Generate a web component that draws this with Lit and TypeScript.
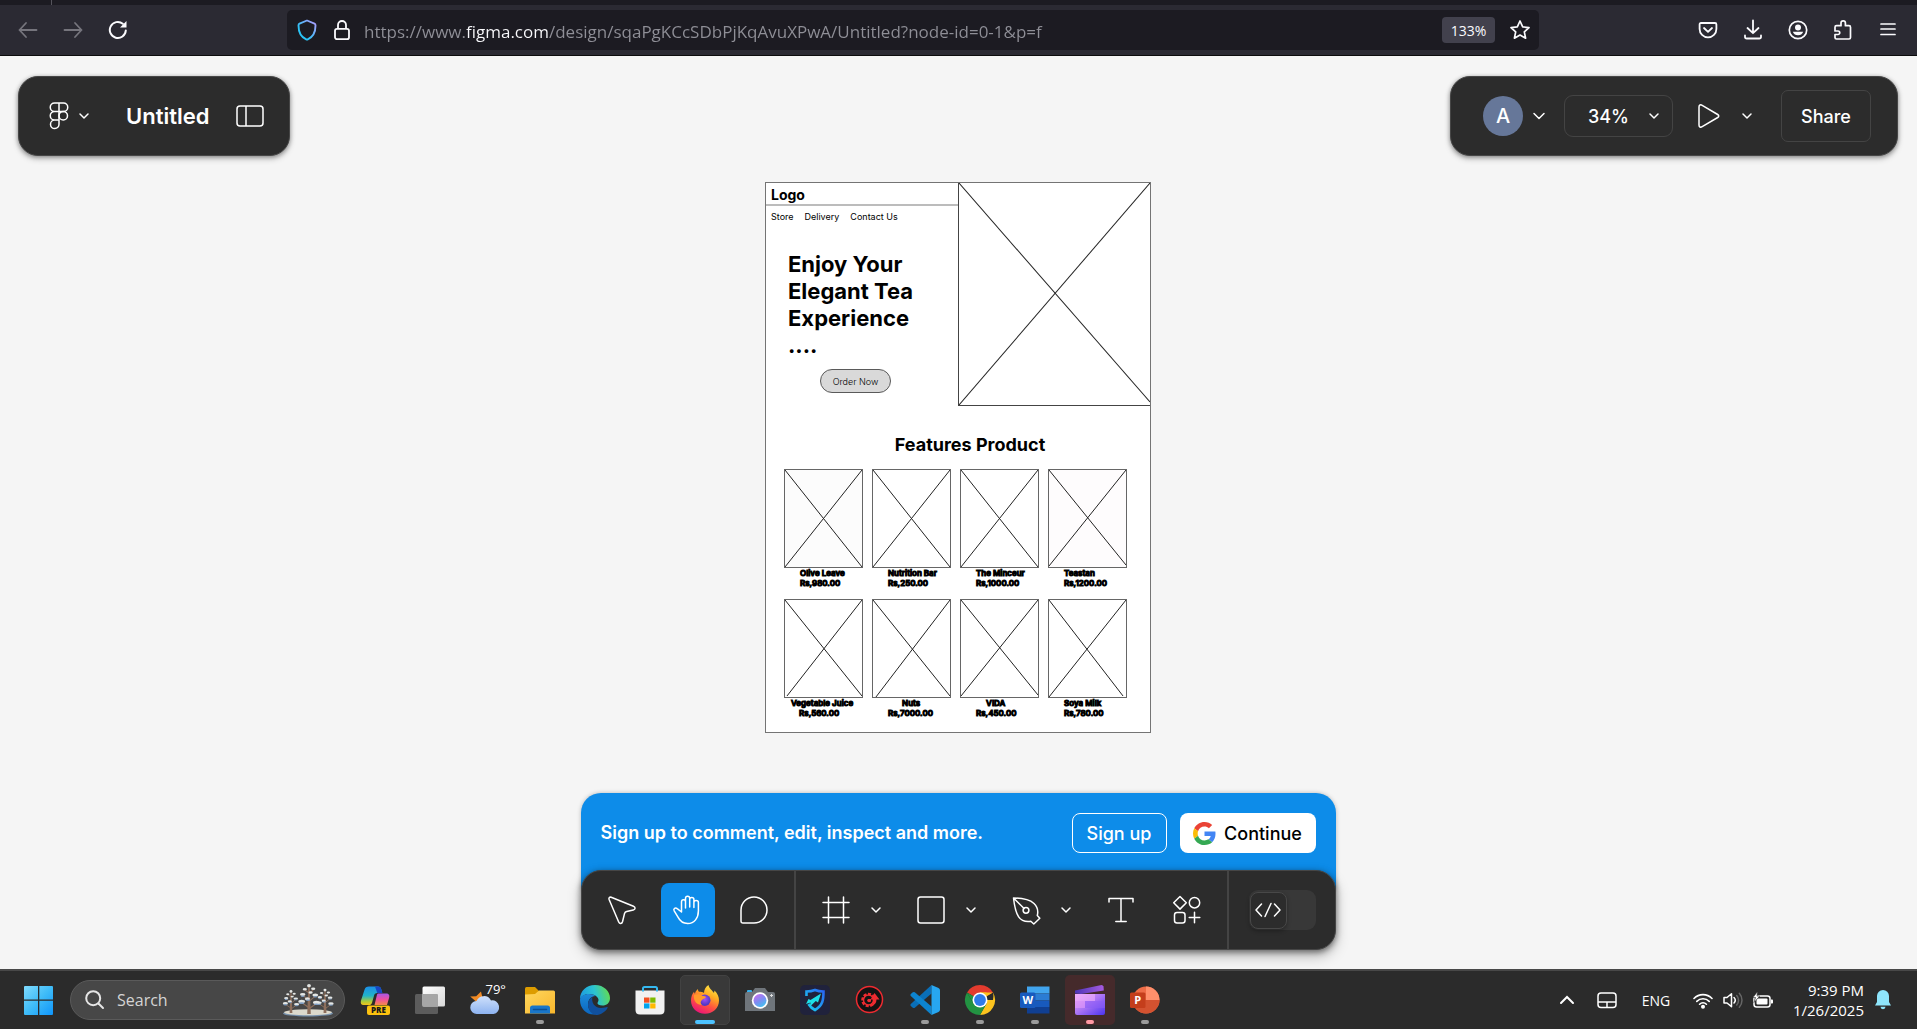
import { LitElement, html, svg, css } from "lit";
import { customElement } from "lit/decorators.js";

const chevron = html`<svg class="chev" width="12" height="8" viewBox="0 0 12 8" fill="none" stroke="#fff" stroke-width="1.5" stroke-linecap="round" stroke-linejoin="round"><path d="M2 2l4 4 4-4" /></svg>`;
const chevronWide = html`<svg class="chev" width="14" height="8" viewBox="0 0 14 8" fill="none" stroke="#fff" stroke-width="1.5" stroke-linecap="round" stroke-linejoin="round"><path d="M2 1.5l5 5 5-5" /></svg>`;

const reset = css`
  * { box-sizing: border-box; }
  button, input, select { font: inherit; color: inherit; margin: 0; padding: 0; border: 0; background: none; }
  button { display: flex; align-items: center; justify-content: center; flex: none; }
  svg { display: block; flex: none; }
`;

@customElement("browser-bar")
class BrowserBar extends LitElement {
  static styles = [reset, css`
    :host { display: block; font-family: "Open Sans", "Noto Sans", sans-serif; color: #fbfbfe; }
    .tabs { height: 5px; background: #1c1b22; padding-left: 51px; }
    .tab-edge { width: 1px; height: 5px; background: #55545c; }
    .bar { display: flex; align-items: center; height: 51px; background: #2b2a33; border-bottom: 1px solid #0c0c0d; }
    .nav { display: flex; width: 287px; padding-left: 5px; }
    .nav button, .tools button { width: 45px; height: 40px; }
    .url { flex: 1; min-width: 0; height: 40px; display: flex; align-items: center; background: #1c1b22; border-radius: 5px; padding: 0 3px 0 4px; }
    .url button { width: 32px; height: 32px; }
    .url .lock { width: 38px; }
    .url input { flex: 1; min-width: 0; height: 32px; margin-left: 3px; padding-top: 2px; outline: none; font-size: 17px;
      color: transparent; background: linear-gradient(90deg, #8f8f97 102px, #fbfbfe 102px 185px, #8f8f97 185px);
      -webkit-background-clip: text; background-clip: text; }
    .url .zoom { width: 53px; height: 26px; background: #42414d; border-radius: 4px; font-size: 14px; margin-right: 9px; }
    .tools { display: flex; justify-content: flex-end; width: 378px; padding-right: 7px; }
  `];
  render() {
    return html`
      <div class="tabs"><div class="tab-edge"></div></div>
      <div class="bar">
        <div class="nav">
          <button aria-label="Back"><svg width="20" height="20" viewBox="0 0 20 20" fill="none" stroke="#76757d" stroke-width="1.8" stroke-linecap="round" stroke-linejoin="round"><path d="M18.500 10H1.500M8 3L1.500 10 8 17" /></svg></button>
          <button aria-label="Forward"><svg width="20" height="20" viewBox="0 0 20 20" fill="none" stroke="#76757d" stroke-width="1.8" stroke-linecap="round" stroke-linejoin="round"><path d="M1.500 10h17M12 3l6.500 7L12 17" /></svg></button>
          <button aria-label="Reload"><svg width="20" height="20" viewBox="0 0 20 20" fill="none" stroke="#fbfbfe" stroke-width="2" stroke-linecap="round"><path d="M17.800 10.500a8 8 0 1 1-3-6.800" /><path d="M18.500 1v6.500H12z" fill="#fbfbfe" stroke="none" /></svg></button>
        </div>
        <div class="url">
          <button aria-label="Tracking protection"><svg width="20" height="22" viewBox="0 0 20 22" fill="none"><defs><linearGradient id="sh" x1="0" y1="1" x2="1" y2="0"><stop offset=".3" stop-color="#2ac3f5" /><stop offset="1" stop-color="#b69aff" /></linearGradient></defs><path d="M10 1.500l7.500 3.200c.9.400 1 .8 1 1.700 0 5.500-1.500 11-7.700 13.900-.6.300-1 .3-1.600 0C3 17.400 1.500 11.900 1.500 6.400c0-.9.100-1.300 1-1.700z" stroke="url(#sh)" stroke-width="1.900" stroke-linejoin="round" /></svg></button>
          <button class="lock" aria-label="Site information"><svg width="18" height="22" viewBox="0 0 18 22" fill="none" stroke="#fbfbfe" stroke-width="1.800"><rect x="2" y="9.800" width="14" height="10.400" rx="2" /><path d="M5 9.800V6a4 4 0 0 1 8 0v3.800" /></svg></button>
          <input aria-label="Address" value="https://www.figma.com/design/sqaPgKCcSDbPjKqAvuXPwA/Untitled?node-id=0-1&p=f" />
          <button class="zoom">133%</button>
          <button aria-label="Bookmark"><svg width="22" height="22" viewBox="0 0 22 22" fill="none" stroke="#fbfbfe" stroke-width="1.700" stroke-linejoin="round"><path d="M11 2l2.700 5.900 6.300.7-4.700 4.300 1.300 6.300L11 16.100l-5.600 3.100 1.300-6.300L2 8.600l6.300-.7z" /></svg></button>
        </div>
        <div class="tools">
          <button aria-label="Pocket"><svg width="20" height="20" viewBox="0 0 20 20" fill="none" stroke="#fbfbfe" stroke-width="1.800" stroke-linecap="round" stroke-linejoin="round"><path d="M3 3h14c.9 0 1.400.5 1.400 1.400V9a8.400 8.400 0 0 1-16.800 0V4.400C1.600 3.500 2.100 3 3 3z" /><path d="M6 8l4 3.800L14 8" /></svg></button>
          <button aria-label="Downloads"><svg width="20" height="22" viewBox="0 0 20 22" fill="none" stroke="#fbfbfe" stroke-width="1.800" stroke-linecap="round" stroke-linejoin="round"><path d="M10 1.500V14M4.500 9l5.500 5.200L15.500 9" /><path d="M2 16.500v1.200c0 1 .8 1.800 1.800 1.800h12.400c1 0 1.800-.8 1.800-1.800v-1.200" /></svg></button>
          <button aria-label="Account"><svg width="20" height="20" viewBox="0 0 20 20"><circle cx="10" cy="10" r="8.700" fill="none" stroke="#fbfbfe" stroke-width="1.700" /><circle cx="10" cy="7.500" r="3" fill="#fbfbfe" /><path d="M4.800 11.800h10.400a5.600 5.600 0 0 1-10.400 0z" fill="#fbfbfe" /></svg></button>
          <button aria-label="Extensions"><svg width="20" height="22" viewBox="0 0 20 22" fill="none" stroke="#fbfbfe" stroke-width="1.700" stroke-linejoin="round"><path d="M2 12V8.200c0-1 .5-1.500 1.500-1.500H8V4a2.200 2.200 0 0 1 4.400 0v2.700H16c1 0 1.500.5 1.500 1.500v10.300c0 1-.5 1.500-1.500 1.500H3.500c-1 0-1.500-.5-1.500-1.500v-3h3a1.750 1.750 0 0 0 0-3.500z" /></svg></button>
          <button aria-label="Menu"><svg width="18" height="16" viewBox="0 0 18 16" stroke="#fbfbfe" stroke-width="1.700" stroke-linecap="round"><path d="M2 2h14M2 7h14M2 12.500h14" /></svg></button>
        </div>
      </div>`;
  }
}

type Product = { name: string; price: string; wide?: boolean; fill?: string; a: number[]; b: number[] };
const products: Product[] = [
  { name: "Olive Leave", price: "Rs,980.00", fill: "#fcfcfc", a: [0, 0, 78, 98], b: [78, 0, 0, 98] },
  { name: "Nutrition Bar", price: "Rs,250.00", a: [0, 0, 78, 98], b: [78, 0, 0, 98] },
  { name: "The Minceur", price: "Rs,1000.00", a: [0, 0, 78, 98], b: [78, 0, 0, 98] },
  { name: "Teastan", price: "Rs,1200.00", fill: "#fefcfd", a: [0, 0, 78, 96], b: [78, 0, 0, 97] },
  { name: "Vegetable Juice", price: "    Rs,560.00", wide: true, a: [0, 0, 78, 97], b: [78, 0, 2, 97] },
  { name: "       Nuts", price: "Rs,7000.00", a: [0, 0, 78, 97], b: [78, 0, 3, 98] },
  { name: "     VIDA", price: "Rs,450.00", a: [0, 0, 78, 96], b: [78, 0, 0, 97] },
  { name: "Soya Milk", price: "Rs,780.00", a: [0, 0, 75, 97], b: [78, 0, 0, 98] },
];

@customElement("tea-artboard")
class TeaArtboard extends LitElement {
  static styles = [reset, css`
    :host { display: block; font-family: Inter, sans-serif; font-optical-sizing: none; color: #000; background: #fff; border: 1px solid #747474; }
    .top { display: grid; grid-template-columns: 192px 1fr; }
    .logo { height: 23px; padding: 3px 5px; font-size: 14px; line-height: 17px; font-weight: 700; border-bottom: 2px solid #bcbcbc; }
    nav { display: flex; gap: 11px; padding: 5px 5px 0; }
    nav a { color: #000; text-decoration: none; font-size: 9px; line-height: 12px; white-space: nowrap; }
    h1 { margin: 28px 0 0 22px; font-size: 22px; line-height: 27px; font-weight: 700; }
    .order { width: 71px; height: 24px; margin: 10px 0 0 54px; border: 1px solid #5a5a5a; border-radius: 12px; background: #d9d9d9; font-size: 9px; font-weight: 300; }
    .hero { border-left: 1px solid #444; border-bottom: 1px solid #444; height: 223px; }
    .hero svg { width: 100%; height: 100%; }
    h2 { margin: 28px 0 0 24px; text-align: center; font-size: 18px; line-height: 22px; font-weight: 700; }
    .grid { display: grid; grid-template-columns: repeat(4, 79px); gap: 9px; padding: 13px 18px 12px; }
    .pic { height: 99px; border: 1px solid #666; }
    .pic svg { width: 100%; height: 100%; }
    .label { height: 22px; padding-left: 16px; white-space: pre; font-size: 8px; line-height: 10px; font-weight: 600; -webkit-text-stroke: 1px #000; }
    .wide { padding-left: 7px; }
  `];
  render() {
    const line = (p: number[]) => svg`<line x1=${p[0]} y1=${p[1]} x2=${p[2]} y2=${p[3]} stroke="#222" stroke-width="1" vector-effect="non-scaling-stroke" />`;
    return html`
      <div class="top">
        <div>
          <div class="logo">Logo</div>
          <nav><a href="#store">Store</a><a href="#delivery">Delivery</a><a href="#contact">Contact Us</a></nav>
          <h1>Enjoy Your<br />Elegant Tea<br />Experience<br />....</h1>
          <button class="order">Order Now</button>
        </div>
        <div class="hero"><svg viewBox="0 0 191 223" preserveAspectRatio="none">${line([0, 0, 191, 220])}${line([191, 0, 0, 223])}</svg></div>
      </div>
      <h2>Features Product</h2>
      <div class="grid">
        ${products.map((p) => html`<div>
          <div class="pic"><svg viewBox="0 0 78 98" preserveAspectRatio="none"><rect width="78" height="98" fill=${p.fill ?? "#fff"} />${line(p.a)}${line(p.b)}</svg></div>
          <div class="label ${p.wide ? "wide" : ""}">${p.name}<br />${p.price}</div>
        </div>`)}
      </div>`;
  }
}

@customElement("editor-dock")
class EditorDock extends LitElement {
  static styles = [reset, css`
    :host { display: block; font-family: Inter, sans-serif; color: #fff; font-size: 18px; }
    .banner { display: flex; align-items: center; background: #0d8ce9; border-radius: 20px 20px 0 0; padding: 20px 20px 37px; margin-bottom: -20px; box-shadow: 0 0 4px rgba(0, 0, 0, .25); }
    .banner p { margin: 0; flex: 1; font-weight: 600; font-optical-sizing: none; line-height: 24px; white-space: nowrap; }
    .banner button { height: 40px; border-radius: 8px; font-weight: 500; }
    .signup { width: 95px; border: 1px solid #fff; margin-right: 13px; }
    .google { width: 136px; background: #fff; color: #000; gap: 8px; }
    .bar { position: relative; display: flex; height: 80px; border-radius: 20px; background: #2c2c2c; border: 1px solid #464646; box-shadow: 0 2px 6px rgba(0, 0, 0, .5), 0 6px 14px rgba(0, 0, 0, .25); }
    .group { display: flex; align-items: center; padding: 0 13px; gap: 12px; }
    .group + .group { border-left: 2px solid #444; }
    .shapes { gap: 15px; }
    .pair { display: flex; }
    .pair .more { width: 26px; }
    .tools { display: flex; gap: 12px; }
    .tool { width: 54px; height: 54px; border-radius: 8px; }
    .active { background: #0d8ce9; }
    .mode { padding: 0 18px 0 20px; }
    .toggle { display: flex; align-items: center; width: 67px; height: 40px; border-radius: 9px; background: #383838; padding-left: 1px; cursor: pointer; }
    .toggle input { appearance: none; width: 0; height: 0; }
    .thumb { display: flex; align-items: center; justify-content: center; width: 37px; height: 37px; border-radius: 8px; background: #2c2c2c; border: 1px solid #484848; box-shadow: 0 2px 4px rgba(0, 0, 0, .3); }
  `];
  render() {
    const ico = (w: ReturnType<typeof svg>) => html`<svg width="32" height="32" viewBox="0 0 32 32" fill="none" stroke="#fff" stroke-width="1.500" stroke-linecap="round" stroke-linejoin="round">${w}</svg>`;
    return html`
      <div class="banner">
        <p>Sign up to comment, edit, inspect and more.</p>
        <button class="signup">Sign up</button>
        <button class="google"><svg width="23" height="23" viewBox="0 0 48 48"><path fill="#EA4335" d="M24 9.500c3.540 0 6.710 1.220 9.210 3.600l6.850-6.850C35.900 2.380 30.470 0 24 0 14.620 0 6.510 5.380 2.560 13.220l7.980 6.190C12.430 13.720 17.740 9.500 24 9.500z"/><path fill="#4285F4" d="M46.980 24.550c0-1.570-.15-3.090-.38-4.550H24v9.020h12.940c-.58 2.960-2.260 5.480-4.780 7.180l7.730 6c4.510-4.180 7.090-10.360 7.090-17.650z"/><path fill="#FBBC05" d="M10.530 28.590c-.48-1.450-.76-2.990-.76-4.590s.27-3.140.76-4.590l-7.980-6.190C.92 16.460 0 20.120 0 24c0 3.880.92 7.540 2.560 10.780l7.970-6.190z"/><path fill="#34A853" d="M24 48c6.480 0 11.930-2.130 15.890-5.810l-7.730-6c-2.150 1.450-4.920 2.300-8.160 2.300-6.260 0-11.570-4.220-13.470-9.910l-7.980 6.190C6.510 42.620 14.620 48 24 48z"/></svg>Continue</button>
      </div>
      <div class="bar" role="toolbar" aria-label="Tools">
        <div class="group">
          <button class="tool" aria-label="Move">${ico(svg`<path d="M5.200 3.300l22.300 8.900c2.200.9 2 3.300-.2 3.800l-6.600 1.600c-1.200.3-1.800.9-2.200 2l-2 8.200c-.6 2.200-2.900 2.400-3.800.2L3.100 5.500c-.6-1.600.6-2.800 2.100-2.200z" />`)}</button>
          <button class="tool active" aria-label="Hand">${ico(svg`<path d="M9.500 18V7.800c0-2.900 4-2.900 4 0v6.200M13.500 13V4.500c0-2.900 4.200-2.900 4.200 0V13M17.700 5.500c0-2.700 4.200-2.700 4.200 0v8M21.900 8.500c0-2.700 4.500-2.700 4.500 0v8.300c0 7.300-4 12.700-10.700 12.700-5 0-7.700-2.300-9.700-6.300l-3.800-6.400c-1.200-2.300 1.200-3.700 3-2.200L9.500 18" />`)}</button>
          <button class="tool" aria-label="Comment">${ico(svg`<path d="M16 3a13 13 0 0 1 0 26H5c-1.300 0-2-.7-2-2V16A13 13 0 0 1 16 3z" />`)}</button>
        </div>
        <div class="group shapes">
          <div class="pair"><button class="tool" aria-label="Frame">${ico(svg`<path d="M8.500 3v26M23.500 3v26M3 8.500h26M3 23.500h26" />`)}</button><button class="more" aria-label="Frame tools">${chevron}</button></div>
          <div class="pair"><button class="tool" aria-label="Rectangle">${ico(svg`<rect x="3" y="3" width="26" height="26" rx="2.500" />`)}</button><button class="more" aria-label="Shape tools">${chevron}</button></div>
          <div class="pair"><button class="tool" aria-label="Pen">${ico(svg`<path d="M3.500 4c7 0 15 .5 20.500 5.500 3.500 3.300 4.400 7.500 3.300 12l2.500 2.800-6 5.700-3-2.700C9.500 29 5.500 21.500 3.500 4zM3.800 4.300l10.300 10.200" /><circle cx="16" cy="16.300" r="2.900" />`)}</button><button class="more" aria-label="Pen tools">${chevron}</button></div>
          <div class="tools">
            <button class="tool" aria-label="Text">${ico(svg`<path d="M4 8V4.500h24V8M16 4.500V27.500M10.800 27.500h10.400" />`)}</button>
            <button class="tool" aria-label="Actions">${ico(svg`<path d="M9 2.500L15.300 8.800 9 15.100 2.700 8.800zM23.500 18.200v10.600M18.200 23.500h10.600" /><circle cx="23.500" cy="8.700" r="5.200" /><rect x="3.500" y="18.500" width="10.500" height="10.500" rx="2.500" />`)}</button>
          </div>
        </div>
        <div class="group mode">
          <label class="toggle"><input type="checkbox" aria-label="Dev Mode" /><span class="thumb"><svg width="28" height="18" viewBox="0 0 28 18" fill="none" stroke="#fff" stroke-width="1.500" stroke-linecap="round" stroke-linejoin="round"><path d="M7.500 3L2 9l5.500 6M20.500 3L26 9l-5.500 6M17 2.500l-6 13" /></svg></span></label>
        </div>
      </div>`;
  }
}

const apps: { label: string; state?: string; icon: ReturnType<typeof svg> }[] = [
  { label: "Copilot", icon: svg`<defs><linearGradient id="cp1" x1="0" y1="0" x2="0" y2="1"><stop offset="0" stop-color="#1c8fe8"/><stop offset=".5" stop-color="#21b4c8"/><stop offset=".8" stop-color="#a9cc3c"/><stop offset="1" stop-color="#f5c518"/></linearGradient><linearGradient id="cp2" x1="0" y1="0" x2="0" y2="1"><stop offset="0" stop-color="#a658e8"/><stop offset=".5" stop-color="#ee4fa0"/><stop offset="1" stop-color="#f58a4a"/></linearGradient></defs><path d="M9 1.500h9c2 0 2.800 1.200 3.300 3l1 3.500h-5c-2 0-2.800 1-3.300 2.700l-2 7C11.500 19.500 10.500 20 9 20H3.500C1 20 .3 18 1 15.500L4.500 4.800C5.200 2.500 6.500 1.500 9 1.500z" fill="url(#cp1)"/><path d="M15 1.500h3c2 0 2.800 1.200 3.300 3l1 3.500h-5z" fill="#1746c4"/><path d="M18.500 8.500H26c3 0 3.800 1.800 3.100 4.200L27 20H14.500l2.300-9.500c.3-1.400.8-2 1.700-2z" fill="url(#cp2)"/><rect x="7" y="20.500" width="23" height="9.500" rx="2" fill="#fdc20f"/><text x="18.500" y="28.200" text-anchor="middle" font-family="Open Sans, sans-serif" font-size="8" font-weight="800" fill="#1a1a1a">PRE</text>` },
  { label: "Task view", icon: svg`<defs><linearGradient id="tv" x1="0" y1="0" x2="1" y2="1"><stop offset="0" stop-color="#fff"/><stop offset="1" stop-color="#d8d8d8"/></linearGradient></defs><rect x="0" y="9" width="23" height="20" rx="1.500" fill="#5c5c5c"/><rect x="7.500" y="1.500" width="22.500" height="20" rx="1.500" fill="url(#tv)"/><path d="M7.500 9H22q1 0 1 1v11.500H7.500z" fill="#a6a6a6"/>` },
  { label: "Weather 79°", icon: svg`<defs><linearGradient id="cl" x1="0" y1="0" x2="0" y2="1"><stop offset="0" stop-color="#cfe0fb"/><stop offset="1" stop-color="#8db3f0"/></linearGradient></defs><path d="M11 6.500l1.200 5 3 4-8 2-7-6 6-.3z" fill="#f08a24"/><path d="M7 29a6.500 6.500 0 0 1-.5-13A8 8 0 0 1 21 15.500 6.800 6.800 0 0 1 23.500 29z" fill="url(#cl)"/><text x="15.500" y="9" font-family="Open Sans, sans-serif" font-size="13" fill="#fff">79°</text>` },
  { label: "File Explorer", state: "open", icon: svg`<defs><linearGradient id="fo" x1="0" y1="0" x2="1" y2="1"><stop offset="0" stop-color="#ffd75e"/><stop offset="1" stop-color="#f8b62c"/></linearGradient></defs><path d="M0 3.500q0-1.500 1.500-1.500H10L13.500 5.500v5H0z" fill="#dd9c00"/><path d="M0 9.500l10-.5L14 5.500h14.500Q30 5.500 30 7V28.500H0z" fill="url(#fo)"/><path d="M5 28.500v-5.500q0-2.500 2.500-2.500h15q2.500 0 2.500 2.500v5.500z" fill="#1976c9"/><path d="M8.500 24.500h13" stroke="#0b4f96" stroke-width="1.500" stroke-linecap="round"/>` },
  { label: "Edge", icon: svg`<defs><linearGradient id="e1" x1="0" y1=".5" x2="1" y2=".3"><stop offset="0" stop-color="#1d9be0"/><stop offset=".5" stop-color="#2bc3d2"/><stop offset="1" stop-color="#66dd4a"/></linearGradient><linearGradient id="e2" x1="0" y1="0" x2="0" y2="1"><stop offset="0" stop-color="#1c8ad8"/><stop offset="1" stop-color="#0b66c0"/></linearGradient></defs><path d="M0 14C0 6 6.500 0 15 0c9 0 15 6.500 15 13 0 5-3.500 7.500-7.500 7.500-3.500 0-5-1.200-5-2.300 0-1 1-1.400 1-3.400C18.500 12 14 9 9.500 9 5 9 1.500 11 0 14z" fill="url(#e1)"/><path d="M0 15c0-3.500 4-6 9-6 3 0 5 .8 6.500 2-4.500 0-7.500 4-7.500 8.500 0 4.500 3 8.500 7.500 10C6.500 30.500 0 23.500 0 15z" fill="url(#e2)"/><path d="M8 19.500c0-3.500 2-6 4.500-7.500-1.500 5 2 11 8.500 11 3.500 0 5.200-1 6-1 .7 0 .8.600.4 1.200C25 27 20.500 30 16 30c-4.800-1-8-5.500-8-10.500z" fill="#10509e"/>` },
  { label: "Microsoft Store", icon: svg`<path d="M8 7V3.500Q8 2 9.500 2h11Q22 2 22 3.500V7" fill="none" stroke="#35b8f0" stroke-width="2"/><path d="M.5 5.500h29V25q0 4.500-4.500 4.500H5Q.5 29.500.5 25z" fill="#f1f1f1"/><path d="M9 12.500h5.500v5.200H9z" fill="#f25022"/><path d="M15.200 12.500h5.300v5.200h-5.300z" fill="#7fba00"/><path d="M9 18.400h5.500v5.100H9z" fill="#00a4ef"/><path d="M15.200 18.400h5.300v5.100h-5.300z" fill="#ffb900"/><path d="M8 6.500V3M22 6.500V3" stroke="#35b8f0" stroke-width="2"/>` },
  { label: "Firefox", state: "open focus", icon: svg`<defs><linearGradient id="f1" x1=".8" y1="0" x2=".3" y2="1"><stop offset="0" stop-color="#fff04a"/><stop offset=".35" stop-color="#ffab22"/><stop offset=".65" stop-color="#ff5240"/><stop offset="1" stop-color="#e9127a"/></linearGradient><radialGradient id="f2" cx=".5" cy=".4"><stop offset="0" stop-color="#a450f8"/><stop offset="1" stop-color="#5138c4"/></radialGradient></defs><path d="M18.500 0c.5 3.500 3.500 5 5.500 8l.5-2.500C27.500 8 29 12 29 15.500 29 23 23 28.800 15 28.800S1 23 1 15.500C1 12 2.200 9 4 6.800c.2 1 .5 1.500 1 2 .3-2 1.600-3.700 3-4.800 0 1.500.3 2 1 2.700 2 0 3.500.2 5 1.200C14 5 15.500 1.800 18.500 0z" fill="url(#f1)"/><circle cx="14.800" cy="15.300" r="5.700" fill="url(#f2)"/><path d="M4 10c3-1.500 6.500-1 8.500 1 1.500 0 2.800 0 3.500 1-1 2-3.500 1.800-4.500 3.500-1 1-1.500 3 .5 4.500-5 0-9-4-8-10z" fill="#ff9a2b"/>` },
  { label: "Camera", icon: svg`<defs><linearGradient id="ca" x1=".2" y1="0" x2=".8" y2="1"><stop offset="0" stop-color="#c76ef0"/><stop offset=".5" stop-color="#7d8df2"/><stop offset="1" stop-color="#3cc6f0"/></linearGradient></defs><rect x="2" y="5" width="5" height="4" rx="1" fill="#35b0ee"/><path d="M10 3h10l3 4h5q2 0 2 2v17H0V9q0-2 2-2h5z" fill="#6f757b"/><circle cx="15" cy="15.500" r="8.200" fill="#fff"/><circle cx="15" cy="15.500" r="6.500" fill="url(#ca)"/><path d="M26.500 9v3M25 10.500h3" stroke="#ddd"/>` },
  { label: "VPN", icon: svg`<defs><linearGradient id="vp" x1="0" y1="1" x2="1" y2="0"><stop offset="0" stop-color="#17d3f0"/><stop offset="1" stop-color="#2a63f6"/></linearGradient></defs><rect width="30" height="30" rx="5" fill="#20223c"/><path d="M6.500 11V6.500C10 6.500 13 5.800 15 5c2 .8 5 1.500 8.500 1.500 0 8-.5 14-8.500 18.500-3-1.500-5-3.500-6.500-6" fill="none" stroke="url(#vp)" stroke-width="2.600"/><path d="M21 8.500l-3 9-2.200-1.500-5.800 5.500.5-4L6 19l2.500-5 2 1z" fill="#1de0e8"/>` },
  { label: "Driver tool", icon: svg`<circle cx="14.500" cy="14.500" r="13" fill="#131313" stroke="#ee2b30" stroke-width="1.500"/><circle cx="13.500" cy="15" r="6" fill="none" stroke="#ee2b30" stroke-width="2.500" stroke-dasharray="3 1.500"/><circle cx="13.500" cy="15" r="5" fill="none" stroke="#ee2b30" stroke-width="1.500"/><path d="M13 14h3v2.500q-3 2-4-1z" fill="#ee2b30"/><path d="M19.500 8l5 6.500h-3q0 5-5.500 7 3-3 2-7h-2.500z" fill="#ee2b30"/>` },
  { label: "Visual Studio Code", state: "open", icon: svg`<path d="M21.500 0v8.500L4.800 22.700q-1 .8-2 0L.8 21q-1-1 0-2z" fill="#0a6fb8"/><path d="M21.500 30v-8.500L4.800 7.300q-1-.8-2 0L.8 9q-1 1 0 2z" fill="#0d84cf"/><path d="M21.500 0l7 3q1.500.8 1.500 2.300v19.400q0 1.500-1.500 2.300l-7 3z" fill="#27a6f0"/>` },
  { label: "Chrome", state: "open", icon: svg`<path d="M15 15L2 7.500A15 15 0 0 1 28 7.500z" fill="#e33b2e"/><path d="M15 15h13A15 15 0 0 0 28 7.500H15zM28 7.500A15 15 0 0 1 15 30l6.500-11.500V7.500z" fill="#fcc31e"/><path d="M2 7.500A15 15 0 0 0 15 30l6.500-11.300L8.500 18.700z" fill="#229342"/><path d="M2 7.500l6.500 11.200L15 15z" fill="#229342"/><path d="M28 7.500H15v7.500z" fill="#fcc31e"/><circle cx="15" cy="15" r="7.500" fill="#fff"/><circle cx="15" cy="15" r="5.900" fill="#2f7bea"/>` },
  { label: "Word", state: "open", icon: svg`<path d="M7 1.500h22.500V8.500H7z" fill="#41a5ee"/><path d="M7 8.500h22.500v7H7z" fill="#2b7cd3"/><path d="M7 15.500h22.500v6.500H7z" fill="#185abd"/><path d="M7 22h22.500v6.500H7z" fill="#103f91"/><rect x="0" y="7.500" width="15.500" height="15.500" rx="1.500" fill="#185abd"/><text x="7.700" y="19.300" text-anchor="middle" font-family="Open Sans, sans-serif" font-weight="700" font-size="11" fill="#fff">W</text>` },
  { label: "Clipchamp", state: "open alert", icon: svg`<defs><linearGradient id="cc" x1="0" y1="0" x2="1" y2="1"><stop offset="0" stop-color="#f0a5f8"/><stop offset=".5" stop-color="#a872f4"/><stop offset="1" stop-color="#4a33f0"/></linearGradient><linearGradient id="cd" x1="0" y1="0" x2="1" y2="0"><stop offset="0" stop-color="#4b35b8"/><stop offset="1" stop-color="#a65be0"/></linearGradient></defs><path d="M0 8.500V5.500L26.500 0q1.500 0 2 1.500l.3 4L6 9z" fill="url(#cd)"/><path d="M0 9h30v19q0 2-2 2H2q-2 0-2-2z" fill="url(#cc)"/><path d="M0 9h20v7H0z" fill="#f0b0fb" opacity=".6"/><path d="M10 16h20v7H10z" fill="#8d5cf6" opacity=".55"/><path d="M0 16h10v7H0z" fill="#e49bfa" opacity=".6"/>` },
  { label: "PowerPoint", state: "open", icon: svg`<circle cx="16" cy="15" r="13.500" fill="#ed6c47"/><path d="M16 1.500A13.500 13.500 0 0 1 29.500 15H16z" fill="#ff8f6b"/><path d="M2.500 15h27a13.500 13.500 0 0 1-27 0z" fill="#d35230"/><rect x="0" y="7.500" width="15.500" height="15.500" rx="1.500" fill="#c43e1c"/><text x="7.700" y="19.300" text-anchor="middle" font-family="Open Sans, sans-serif" font-weight="700" font-size="11" fill="#fff">P</text>` },
];

@customElement("task-bar")
class TaskBar extends LitElement {
  static styles = [reset, css`
    :host { display: flex; justify-content: space-between; height: 60px; background: #2b2b2b; border-top: 2px solid #484848; font-family: "Open Sans", "Noto Sans", sans-serif; color: #fff; }
    .left, .right { display: flex; align-items: center; }
    .left { padding-left: 24px; }
    .start { width: 30px; height: 30px; margin-right: 16px; }
    .search { display: flex; align-items: center; width: 275px; height: 40px; border-radius: 20px; background: #474747; border: 1px solid #5a5a5a; padding: 0 10px 0 14px; }
    .search input { flex: 1; min-width: 0; margin-left: 12px; font-size: 16px; color: #d4d4d4; outline: none; appearance: none; }
    .search input::placeholder { color: #d4d4d4; }
    .apps { display: flex; gap: 5px; padding-left: 5px; }
    .app { width: 50px; height: 50px; border-radius: 5px; border: 1px solid transparent; display: grid; grid-template-rows: 1fr 4px; align-items: start; justify-items: center; padding: 9px 0 0; }
    .app svg { overflow: visible; }
    .app::after { content: ""; width: 8px; height: 4px; border-radius: 2px; }
    .open::after { background: #9b9b9b; }
    .focus { background: #393939; border-color: #424242; }
    .focus::after { width: 20px; background: #4cc2ff; }
    .alert { background: #452a2b; }
    .alert::after { background: #ff99a4; }
    .right { padding-right: 24px; font-size: 15px; }
    .right button { height: 40px; }
    .up { width: 34px; }
    .pad { width: 46px; margin-right: 3px; }
    .lang { font-size: 14px; width: 46px; }
    .status { gap: 10px; margin: 0 13px 0 14px; }
    .clock { width: 78px; font-size: 15px; line-height: 20px; text-align: right; justify-content: flex-end; white-space: nowrap; margin-right: 9px; }
    .bell { width: 20px; }
  `];
  render() {
    const tree = (x: number, y: number, s: number) => svg`<g transform="translate(${x} ${y}) scale(${s})"><path d="M-1.700 0L-.7-26H.7L1.700 0z" fill="#8d6e5b"/><path d="M0-6L-7-11M0-5l7-5M0-13l-6-5M0-12l6-5M0-20l-4-3M0-19l4-4" fill="none" stroke="#8d6e5b" stroke-width="1.100"/><g fill="#e3e6e4"><ellipse cx="-7" cy="-12" rx="3.200" ry="1.600"/><ellipse cx="-6" cy="-18.500" rx="2.600" ry="1.400"/><ellipse cx="7" cy="-11" rx="3.200" ry="1.600"/><ellipse cx="6" cy="-18" rx="2.800" ry="1.500"/><ellipse cx="0" cy="-27" rx="1.800" ry="1.600"/><ellipse cx="-4" cy="-23.500" rx="2" ry="1.200"/><ellipse cx="4" cy="-24" rx="2" ry="1.200"/><ellipse cx="-1.500" cy="-14.500" rx="2.400" ry="1.500"/><ellipse cx="1.500" cy="-20.500" rx="2" ry="1.200"/></g><g fill="#7e9cc0"><ellipse cx="-7" cy="-10.300" rx="2.500" ry=".8"/><ellipse cx="7" cy="-9.300" rx="2.500" ry=".8"/><ellipse cx="6" cy="-16.500" rx="2" ry=".7"/><ellipse cx="-6" cy="-17" rx="1.800" ry=".7"/><ellipse cx="-1" cy="-13" rx="2" ry=".7"/></g></g>`;
    return html`
      <div class="left">
        <button class="start" aria-label="Start"><svg width="30" height="30" viewBox="0 0 30 30"><defs><linearGradient id="w" x1="0" y1="0" x2="1" y2="1"><stop offset="0" stop-color="#80dbfe"/><stop offset=".5" stop-color="#3fbcf8"/><stop offset="1" stop-color="#0f95fb"/></linearGradient></defs><path d="M1 1h13v13.500H0V2q0-1 1-1zM15.300 1H28q1 0 1 1v12.500H15.300zM0 15.800h14V30H1q-1 0-1-1zM15.300 15.800H29V29q0 1-1 1H15.300z" fill="url(#w)"/></svg></button>
        <label class="search">
          <svg width="20" height="20" viewBox="0 0 20 20" fill="none" stroke="#e6e6e6" stroke-width="2" stroke-linecap="round"><circle cx="8.200" cy="8.200" r="7" /><path d="M13.500 13.500L18 18" /></svg>
          <input type="search" placeholder="Search" aria-label="Search" />
          <svg width="52" height="34" viewBox="0 0 52 34"><ellipse cx="26" cy="30.500" rx="25" ry="3" fill="#7791ad"/><ellipse cx="26" cy="29.300" rx="24" ry="3" fill="#dcd9cc"/>${tree(9, 30, 0.8)}${tree(43, 30, 0.85)}${tree(27, 31, 1.05)}</svg>
        </label>
        <div class="apps">
          ${apps.map((a) => html`<button class="app ${a.state ?? ""}" aria-label=${a.label}><svg width="30" height="30" viewBox="0 0 30 30">${a.icon}</svg></button>`)}
        </div>
      </div>
      <div class="right">
        <button class="up" aria-label="Hidden icons"><svg width="16" height="10" viewBox="0 0 16 10" fill="none" stroke="#fff" stroke-width="2" stroke-linecap="round"><path d="M2 8l6-6 6 6" /></svg></button>
        <button class="pad" aria-label="Touchpad"><svg width="20" height="17" viewBox="0 0 20 17" fill="none" stroke="#fff" stroke-width="1.500"><rect x="1" y="1" width="18" height="14.500" rx="3" /><path d="M1 10h18M10 10v5.500" /></svg></button>
        <button class="lang">ENG</button>
        <button class="status" aria-label="Network, volume, battery">
          <svg width="20" height="17" viewBox="0 0 20 17" fill="none" stroke="#fff" stroke-width="1.600" stroke-linecap="round"><path d="M1 6.500a12.500 12.500 0 0 1 18 0M3.800 9.400a8.700 8.700 0 0 1 12.400 0M6.600 12.200a4.800 4.800 0 0 1 6.800 0" /><circle cx="10" cy="14.700" r="1.200" fill="#fff" /></svg>
          <svg width="20" height="17" viewBox="0 0 20 17" fill="none" stroke="#fff" stroke-width="1.500" stroke-linecap="round" stroke-linejoin="round"><path d="M1 5.500h3L8.500 1.700v13L4 11H1z" /><path d="M11 5.500a4 4 0 0 1 0 5.500" /><path d="M13.700 3.500a7 7 0 0 1 0 9.500M16.300 1.200a10.500 10.500 0 0 1 0 14" stroke="#666" /></svg>
          <svg width="20" height="17" viewBox="0 0 20 17"><rect x="1" y="4" width="16" height="11" rx="2.500" fill="none" stroke="#fff" stroke-width="1.500"/><rect x="3.500" y="6.500" width="11" height="6" rx="1" fill="#fff"/><path d="M18 7.500h1.200q.8 0 .8.800v2.400q0 .8-.8.800H18z" fill="#fff"/><path d="M4.500-.5L0 5.500h2.500L1 10.500 6.800 4H4z" fill="#fff" stroke="#2b2b2b" stroke-width=".6"/></svg>
        </button>
        <button class="clock">9:39 PM<br />1/26/2025</button>
        <button class="bell" aria-label="Notifications"><svg width="18" height="20" viewBox="0 0 18 20" fill="#8ee5fb"><path d="M9 0a6 6 0 0 1 6 6v6l2 3.500H1L3 12V6a6 6 0 0 1 6-6zM6.500 16.700h5a2.500 2.500 0 0 1-5 0z" /></svg></button>
      </div>`;
  }
}

@customElement("app-root")
class AppRoot extends LitElement {
  static styles = [reset, css`
    :host { display: flex; flex-direction: column; min-height: 100vh; background: #f5f5f5; font-family: Inter, sans-serif; color: #fff; font-size: 18px; }
    main { flex: 1; display: flex; flex-direction: column; align-items: center; padding: 20px 19px 19px 18px; }
    header { align-self: stretch; display: flex; justify-content: space-between; margin-bottom: 26px; }
    .panel { display: flex; align-items: center; height: 80px; border-radius: 20px; background: #2c2c2c; border: 1px solid #464646; box-shadow: 0 1px 4px rgba(0, 0, 0, .35), 0 3px 6px rgba(0, 0, 0, .2); }
    .file { padding: 0 25px 0 30px; }
    .menu { gap: 9px; height: 40px; }
    .title { margin: 0 27px 0 36px; font-size: 22px; line-height: 28px; font-weight: 600; }
    .share-panel { padding: 0 26px 0 32px; }
    .avatar { width: 40px; height: 40px; border-radius: 50%; background: #667799; font-size: 20px; font-weight: 500; }
    .account-more { width: 32px; height: 40px; margin-right: 9px; }
    .zoom { display: flex; align-items: center; width: 109px; height: 42px; border: 1px solid #444; border-radius: 9px; padding-right: 12px; margin-right: 12px; }
    .zoom select { flex: 1; height: 40px; padding-left: 23px; appearance: none; font-weight: 500; outline: none; }
    .play { width: 48px; height: 40px; }
    .play-more { width: 28px; height: 40px; margin-right: 20px; }
    .share { width: 90px; height: 52px; border: 1px solid #444; border-radius: 7px; font-weight: 500; }
    tea-artboard { width: 386px; }
    editor-dock { width: 755px; margin-top: auto; padding-top: 20px; }
  `];
  render() {
    return html`
      <browser-bar></browser-bar>
      <main>
        <header>
          <div class="panel file">
            <button class="menu" aria-label="Main menu">
              <svg width="20" height="28" viewBox="0 0 20 28" fill="none" stroke="#fff" stroke-width="1.500"><path d="M10 1H5.500a4.250 4.250 0 0 0 0 8.500H10zM10 1h4.500a4.250 4.250 0 0 1 0 8.500H10M10 9.500H5.500a4.250 4.250 0 0 0 0 8.500H10zM10 18H5.500A4.250 4.250 0 1 0 10 22.250z" /><circle cx="14.250" cy="13.750" r="4.250" /></svg>
              ${chevron}
            </button>
            <span class="title">Untitled</span>
            <button aria-label="Toggle panels"><svg width="28" height="22" viewBox="0 0 28 22" fill="none" stroke="#fff" stroke-width="1.500"><rect x="1" y="1" width="26" height="20" rx="3" /><path d="M10 1v20" /></svg></button>
          </div>
          <div class="panel share-panel">
            <button class="avatar">A</button>
            <button class="account-more" aria-label="Account menu">${chevronWide}</button>
            <label class="zoom"><select aria-label="Zoom level"><option>34%</option></select>${chevron}</label>
            <button class="play" aria-label="Present"><svg width="24" height="26" viewBox="0 0 24 26" fill="none" stroke="#fff" stroke-width="1.500" stroke-linejoin="round"><path d="M2 4v18c0 2 1.500 2.700 3.200 1.700l15.500-9.200c1.400-.8 1.400-2.200 0-3L5.200 2.300C3.500 1.300 2 2 2 4z" /></svg></button>
            <button class="play-more" aria-label="Present options">${chevron}</button>
            <button class="share">Share</button>
          </div>
        </header>
        <tea-artboard></tea-artboard>
        <editor-dock></editor-dock>
      </main>
      <task-bar></task-bar>`;
  }
}
